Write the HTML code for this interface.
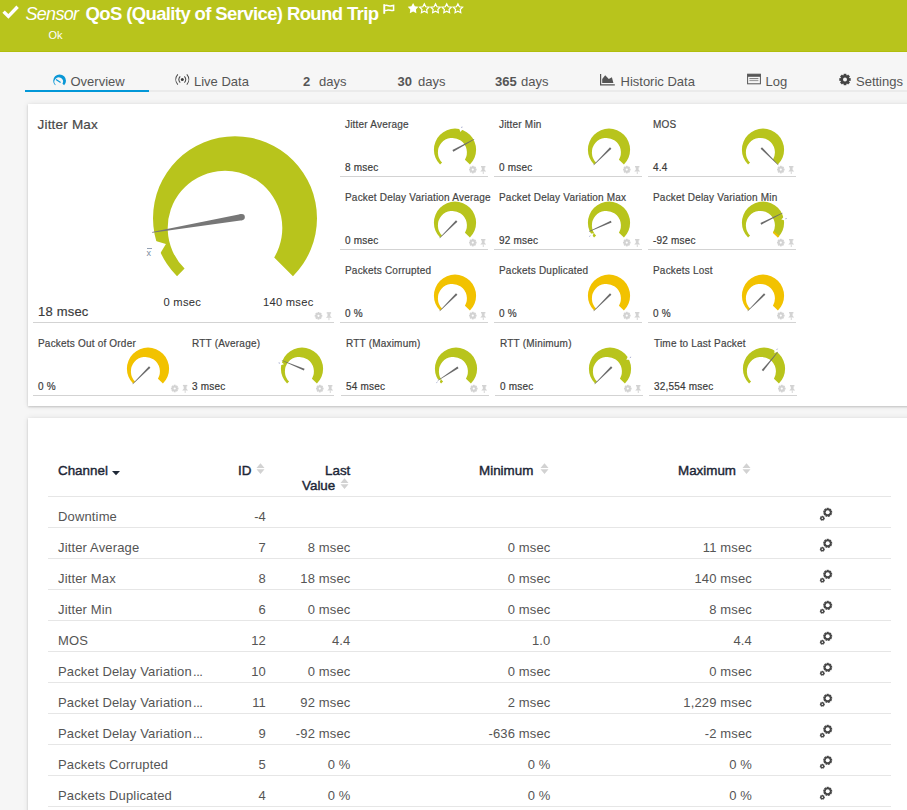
<!DOCTYPE html>
<html><head><meta charset="utf-8">
<style>
*{margin:0;padding:0;box-sizing:border-box}
html,body{width:907px;height:810px;overflow:hidden;background:#f6f6f6;font-family:"Liberation Sans",sans-serif;color:#4d4d4d}
.abs{position:absolute}
#hdr{position:absolute;left:0;top:0;width:907px;height:52px;background:#b8c41c;border-bottom:1px solid #b1be0d}
.ttl{position:absolute;color:#fff;white-space:nowrap;line-height:20px}
#ok{position:absolute;left:48.5px;top:28px;font-size:11px;color:#fff;line-height:14px}
.tab{position:absolute;top:74px;font-size:13px;color:#555;line-height:16px;white-space:nowrap}
.tab b{color:#555;font-weight:bold}
#tabline{position:absolute;left:25px;top:90px;width:882px;height:2px;background:#ebebeb}
#tabsel{position:absolute;left:25px;top:90px;width:124px;height:2px;background:#0398d8}
.panel{position:absolute;background:#fff;box-shadow:0 1px 2px rgba(0,0,0,0.18),0 0 6px rgba(0,0,0,0.09)}
.lab{position:absolute;font-size:10px;letter-spacing:0.2px;line-height:12px;color:#444;white-space:nowrap;-webkit-text-stroke:0.18px #444}
.val{position:absolute;font-size:10px;letter-spacing:0.2px;line-height:12px;color:#3a3a3a;white-space:nowrap;-webkit-text-stroke:0.18px #3a3a3a}
.uline{position:absolute;width:148px;height:1px;background:#d3d3d3}
#gsvg{position:absolute;left:0;top:0}
.th{position:absolute;font-size:13.4px;font-weight:normal;color:#1c2636;line-height:15px;white-space:nowrap;-webkit-text-stroke:0.4px #1c2636}
.tr{position:absolute;left:48px;width:843px;height:30px;font-size:13px;color:#555;line-height:15px;letter-spacing:0.15px}
.tr span{position:absolute;top:12px;white-space:nowrap}
.c0{left:10px}
.c1{right:625px;text-align:right}
.c2{right:540.5px;text-align:right}
.c3{right:340.5px;text-align:right}
.c4{right:139px;text-align:right}
.cg{position:absolute;left:770px;top:8px}
.tsep{position:absolute;left:48px;width:843px;height:1px;background:#e6e6e6}
</style></head>
<body>
<div id="hdr">
  <svg class="abs" style="left:0;top:0" width="907" height="52">
    <path d="M3.6,11.6 L8.4,16.4 L17.6,6.8" fill="none" stroke="#fff" stroke-width="3.4"/>
    <rect x="383.3" y="4.2" width="1.9" height="9.6" fill="#fff"/>
    <path d="M385,5.6 C387.2,4.6 389.4,6.6 391.6,5.8 L393.6,5.4 L393.6,10.4 C391.4,11.2 389.2,9.4 387,10.2 L385,10.4" fill="none" stroke="#fff" stroke-width="1.5"/>
    <g>
      <path d="M413.10,3.00 L414.84,6.20 L418.43,6.87 L415.92,9.52 L416.39,13.13 L413.10,11.57 L409.81,13.13 L410.28,9.52 L407.77,6.87 L411.36,6.20 Z" fill="#fff"/><path d="M424.30,3.80 L425.74,6.72 L428.96,7.19 L426.63,9.46 L427.18,12.66 L424.30,11.15 L421.42,12.66 L421.97,9.46 L419.64,7.19 L422.86,6.72 Z" fill="none" stroke="#fff" stroke-width="1.2"/><path d="M435.50,3.80 L436.94,6.72 L440.16,7.19 L437.83,9.46 L438.38,12.66 L435.50,11.15 L432.62,12.66 L433.17,9.46 L430.84,7.19 L434.06,6.72 Z" fill="none" stroke="#fff" stroke-width="1.2"/><path d="M446.70,3.80 L448.14,6.72 L451.36,7.19 L449.03,9.46 L449.58,12.66 L446.70,11.15 L443.82,12.66 L444.37,9.46 L442.04,7.19 L445.26,6.72 Z" fill="none" stroke="#fff" stroke-width="1.2"/><path d="M457.90,3.80 L459.34,6.72 L462.56,7.19 L460.23,9.46 L460.78,12.66 L457.90,11.15 L455.02,12.66 L455.57,9.46 L453.24,7.19 L456.46,6.72 Z" fill="none" stroke="#fff" stroke-width="1.2"/>
    </g>
  </svg>
  <div class="ttl" style="left:25.5px;top:4px;font-style:italic;font-size:18px;letter-spacing:-0.7px">Sensor</div>
  <div class="ttl" style="left:85.5px;top:4px;font-weight:bold;font-size:18.5px;letter-spacing:-0.62px">QoS (Quality of Service) Round Trip</div>
  <div id="ok">Ok</div>
</div>

<div id="tabline"></div>
<div id="tabsel"></div>
<svg class="abs" style="left:0;top:60px" width="907" height="30">
  <!-- overview icon -->
  <g transform="translate(0,-60)">
  <path d="M55.07,85.33 A6.40,6.40 0 1 1 64.13,85.33 L62.50,83.70 A4.30,4.30 0 1 0 55.66,84.74 Z" fill="#0a97d6"/>
  <path d="M56,79.6 L60.6,82.5" stroke="#0a97d6" stroke-width="1.2"/>
  <!-- live data -->
  <g fill="none" stroke="#4a4a4a" stroke-width="1.05">
    <path d="M177.8,74.4 C175.2,77.4 175.2,81.6 177.8,84.6"/>
    <path d="M180.2,76.4 C178.6,78.2 178.6,80.8 180.2,82.6"/>
    <path d="M186.8,74.4 C189.4,77.4 189.4,81.6 186.8,84.6"/>
    <path d="M184.4,76.4 C186,78.2 186,80.8 184.4,82.6"/>
  </g>
  <circle cx="182.3" cy="79.5" r="1.5" fill="#3a3a3a"/>
  <!-- historic -->
  <path d="M600.6,74 L600.6,84.8 L614.8,84.8" fill="none" stroke="#555" stroke-width="1.2"/>
  <path d="M602.2,83 L602.2,79 L605.2,75.2 L608.8,79.1 L611.9,77.2 L613.4,83 Z" fill="#555"/>
  <!-- log -->
  <rect x="747.6" y="74.2" width="12.8" height="9.6" fill="none" stroke="#555" stroke-width="1"/>
  <rect x="747.6" y="74.2" width="12.8" height="2.6" fill="#555"/>
  <rect x="749.4" y="78.2" width="9" height="0.9" fill="#666"/>
  <rect x="749.4" y="80.2" width="9" height="0.9" fill="#888"/>
  <!-- settings gear -->
  <g fill="#444"><circle cx="845.00" cy="79.50" r="4.56"/><rect x="843.63" y="73.80" width="2.74" height="5.70" transform="rotate(0.0 845.00 79.50)"/><rect x="843.63" y="73.80" width="2.74" height="5.70" transform="rotate(45.0 845.00 79.50)"/><rect x="843.63" y="73.80" width="2.74" height="5.70" transform="rotate(90.0 845.00 79.50)"/><rect x="843.63" y="73.80" width="2.74" height="5.70" transform="rotate(135.0 845.00 79.50)"/><rect x="843.63" y="73.80" width="2.74" height="5.70" transform="rotate(180.0 845.00 79.50)"/><rect x="843.63" y="73.80" width="2.74" height="5.70" transform="rotate(225.0 845.00 79.50)"/><rect x="843.63" y="73.80" width="2.74" height="5.70" transform="rotate(270.0 845.00 79.50)"/><rect x="843.63" y="73.80" width="2.74" height="5.70" transform="rotate(315.0 845.00 79.50)"/></g><circle cx="845.00" cy="79.50" r="2.00" fill="#f5f5f5"/>
  </g>
</svg>
<div class="tab" style="left:70.5px">Overview</div>
<div class="tab" style="left:194px">Live Data</div>
<div class="tab" style="left:303px"><b>2</b></div><div class="tab" style="left:319px">days</div>
<div class="tab" style="left:397.5px"><b>30</b></div><div class="tab" style="left:418px">days</div>
<div class="tab" style="left:495px"><b>365</b></div><div class="tab" style="left:521px">days</div>
<div class="tab" style="left:620.5px">Historic Data</div>
<div class="tab" style="left:765.5px">Log</div>
<div class="tab" style="left:856px">Settings</div>

<div class="panel" style="left:28px;top:104px;width:900px;height:302px"></div>
<div class="panel" style="left:28px;top:418px;width:900px;height:420px"></div>

<div class="lab" style="left:37.5px;top:117px;font-size:13.5px;line-height:15px;color:#4a4a4a">Jitter Max</div>
<div class="val" style="left:38px;top:304px;font-size:13px;line-height:15px">18 msec</div>
<div class="val" style="left:163.5px;top:295px;font-size:11.2px;line-height:14px;color:#333;-webkit-text-stroke:0.05px #333;letter-spacing:0.25px">0 msec</div>
<div class="val" style="left:263px;top:295px;font-size:11.2px;line-height:14px;color:#333;-webkit-text-stroke:0.05px #333;letter-spacing:0.25px">140 msec</div>
<div class="uline" style="left:33px;top:322px;width:301px"></div>
<div class="lab" style="left:345px;top:119px">Jitter Average</div>
<div class="val" style="left:345px;top:162px">8 msec</div>
<div class="uline" style="left:340px;top:176px"></div>
<div class="lab" style="left:499px;top:119px">Jitter Min</div>
<div class="val" style="left:499px;top:162px">0 msec</div>
<div class="uline" style="left:494px;top:176px"></div>
<div class="lab" style="left:653px;top:119px">MOS</div>
<div class="val" style="left:653px;top:162px">4.4</div>
<div class="uline" style="left:648px;top:176px"></div>
<div class="lab" style="left:345px;top:192px">Packet Delay Variation Average</div>
<div class="val" style="left:345px;top:235px">0 msec</div>
<div class="uline" style="left:340px;top:249px"></div>
<div class="lab" style="left:499px;top:192px">Packet Delay Variation Max</div>
<div class="val" style="left:499px;top:235px">92 msec</div>
<div class="uline" style="left:494px;top:249px"></div>
<div class="lab" style="left:653px;top:192px">Packet Delay Variation Min</div>
<div class="val" style="left:653px;top:235px">-92 msec</div>
<div class="uline" style="left:648px;top:249px"></div>
<div class="lab" style="left:345px;top:265px">Packets Corrupted</div>
<div class="val" style="left:345px;top:308px">0 %</div>
<div class="uline" style="left:340px;top:322px"></div>
<div class="lab" style="left:499px;top:265px">Packets Duplicated</div>
<div class="val" style="left:499px;top:308px">0 %</div>
<div class="uline" style="left:494px;top:322px"></div>
<div class="lab" style="left:653px;top:265px">Packets Lost</div>
<div class="val" style="left:653px;top:308px">0 %</div>
<div class="uline" style="left:648px;top:322px"></div>
<div class="lab" style="left:38px;top:338px">Packets Out of Order</div>
<div class="val" style="left:38px;top:381px">0 %</div>
<div class="lab" style="left:192px;top:338px">RTT (Average)</div>
<div class="val" style="left:192px;top:381px">3 msec</div>
<div class="lab" style="left:346px;top:338px">RTT (Maximum)</div>
<div class="val" style="left:346px;top:381px">54 msec</div>
<div class="uline" style="left:341px;top:395px"></div>
<div class="lab" style="left:500px;top:338px">RTT (Minimum)</div>
<div class="val" style="left:500px;top:381px">0 msec</div>
<div class="uline" style="left:495px;top:395px"></div>
<div class="lab" style="left:654px;top:338px">Time to Last Packet</div>
<div class="val" style="left:654px;top:381px">32,554 msec</div>
<div class="uline" style="left:649px;top:395px"></div>
<div class="uline" style="left:33px;top:395px;width:301px"></div>
<svg id="gsvg" width="907" height="810">
<path d="M177.02,276.18 A82.00,82.00 0 1 1 292.98,276.18 L274.19,257.39 A57.30,57.30 0 1 0 184.58,268.62 Z" fill="#b8c41c"/>
<path d="M159.90,254.02 L165.92,243.89 L154.94,240.85 Z" fill="#fff"/>
<path d="M241.17,213.95 L152.13,231.96 L152.27,232.75 L242.23,220.16 Z" fill="#777777"/><circle cx="241.70" cy="217.05" r="3.15" fill="#777777"/>
<text x="146.5" y="255.5" font-size="9" fill="#7a8aa0" font-family="Liberation Sans, sans-serif">x</text><rect x="147" y="248" width="5" height="0.8" fill="#7a8aa0"/>
<g fill="#d3d3d3"><circle cx="318.50" cy="315.80" r="3.04"/><rect x="317.59" y="312.00" width="1.82" height="3.80" transform="rotate(0.0 318.50 315.80)"/><rect x="317.59" y="312.00" width="1.82" height="3.80" transform="rotate(45.0 318.50 315.80)"/><rect x="317.59" y="312.00" width="1.82" height="3.80" transform="rotate(90.0 318.50 315.80)"/><rect x="317.59" y="312.00" width="1.82" height="3.80" transform="rotate(135.0 318.50 315.80)"/><rect x="317.59" y="312.00" width="1.82" height="3.80" transform="rotate(180.0 318.50 315.80)"/><rect x="317.59" y="312.00" width="1.82" height="3.80" transform="rotate(225.0 318.50 315.80)"/><rect x="317.59" y="312.00" width="1.82" height="3.80" transform="rotate(270.0 318.50 315.80)"/><rect x="317.59" y="312.00" width="1.82" height="3.80" transform="rotate(315.0 318.50 315.80)"/></g><circle cx="318.50" cy="315.80" r="1.10" fill="#fff"/><g fill="#d3d3d3"><rect x="326.70" y="312.20" width="4.4" height="1.4"/><rect x="327.50" y="313.20" width="2.8" height="3.4"/><path d="M325.90,317.80 L327.30,316.20 L330.50,316.20 L331.90,317.80 Z"/><rect x="328.50" y="317.60" width="0.9" height="2.6"/></g>
<path d="M440.08,164.62 A21.10,21.10 0 1 1 469.92,164.62 L464.95,159.65 A14.50,14.50 0 1 0 442.10,162.60 Z" fill="#b8c41c"/><path d="M458.87,127.74 L460.44,131.91 L462.99,128.88 Z" fill="#fff"/><path d="M461.64,127.99 L462.05,126.65" stroke="#9aa0c8" stroke-width="0.9"/><path d="M453.34,151.68 L474.28,139.52 L474.04,139.08 L452.44,150.01 Z" fill="#6a6a6a"/>
<g fill="#d3d3d3"><circle cx="472.80" cy="169.60" r="3.04"/><rect x="471.89" y="165.80" width="1.82" height="3.80" transform="rotate(0.0 472.80 169.60)"/><rect x="471.89" y="165.80" width="1.82" height="3.80" transform="rotate(45.0 472.80 169.60)"/><rect x="471.89" y="165.80" width="1.82" height="3.80" transform="rotate(90.0 472.80 169.60)"/><rect x="471.89" y="165.80" width="1.82" height="3.80" transform="rotate(135.0 472.80 169.60)"/><rect x="471.89" y="165.80" width="1.82" height="3.80" transform="rotate(180.0 472.80 169.60)"/><rect x="471.89" y="165.80" width="1.82" height="3.80" transform="rotate(225.0 472.80 169.60)"/><rect x="471.89" y="165.80" width="1.82" height="3.80" transform="rotate(270.0 472.80 169.60)"/><rect x="471.89" y="165.80" width="1.82" height="3.80" transform="rotate(315.0 472.80 169.60)"/></g><circle cx="472.80" cy="169.60" r="1.10" fill="#fff"/><g fill="#d3d3d3"><rect x="481.00" y="166.00" width="4.4" height="1.4"/><rect x="481.80" y="167.00" width="2.8" height="3.4"/><path d="M480.20,171.60 L481.60,170.00 L484.80,170.00 L486.20,171.60 Z"/><rect x="482.80" y="171.40" width="0.9" height="2.6"/></g>
<path d="M594.08,164.62 A21.10,21.10 0 1 1 623.92,164.62 L618.95,159.65 A14.50,14.50 0 1 0 596.10,162.60 Z" fill="#b8c41c"/><path d="M610.03,147.33 L593.41,164.94 L593.76,165.29 L611.37,148.67 Z" fill="#6a6a6a"/>
<g fill="#d3d3d3"><circle cx="626.80" cy="169.60" r="3.04"/><rect x="625.89" y="165.80" width="1.82" height="3.80" transform="rotate(0.0 626.80 169.60)"/><rect x="625.89" y="165.80" width="1.82" height="3.80" transform="rotate(45.0 626.80 169.60)"/><rect x="625.89" y="165.80" width="1.82" height="3.80" transform="rotate(90.0 626.80 169.60)"/><rect x="625.89" y="165.80" width="1.82" height="3.80" transform="rotate(135.0 626.80 169.60)"/><rect x="625.89" y="165.80" width="1.82" height="3.80" transform="rotate(180.0 626.80 169.60)"/><rect x="625.89" y="165.80" width="1.82" height="3.80" transform="rotate(225.0 626.80 169.60)"/><rect x="625.89" y="165.80" width="1.82" height="3.80" transform="rotate(270.0 626.80 169.60)"/><rect x="625.89" y="165.80" width="1.82" height="3.80" transform="rotate(315.0 626.80 169.60)"/></g><circle cx="626.80" cy="169.60" r="1.10" fill="#fff"/><g fill="#d3d3d3"><rect x="635.00" y="166.00" width="4.4" height="1.4"/><rect x="635.80" y="167.00" width="2.8" height="3.4"/><path d="M634.20,171.60 L635.60,170.00 L638.80,170.00 L640.20,171.60 Z"/><rect x="636.80" y="171.40" width="0.9" height="2.6"/></g>
<path d="M748.08,164.62 A21.10,21.10 0 1 1 777.92,164.62 L772.95,159.65 A14.50,14.50 0 1 0 750.10,162.60 Z" fill="#b8c41c"/><path d="M760.63,148.67 L778.24,165.29 L778.59,164.94 L761.97,147.33 Z" fill="#6a6a6a"/>
<g fill="#d3d3d3"><circle cx="780.80" cy="169.60" r="3.04"/><rect x="779.89" y="165.80" width="1.82" height="3.80" transform="rotate(0.0 780.80 169.60)"/><rect x="779.89" y="165.80" width="1.82" height="3.80" transform="rotate(45.0 780.80 169.60)"/><rect x="779.89" y="165.80" width="1.82" height="3.80" transform="rotate(90.0 780.80 169.60)"/><rect x="779.89" y="165.80" width="1.82" height="3.80" transform="rotate(135.0 780.80 169.60)"/><rect x="779.89" y="165.80" width="1.82" height="3.80" transform="rotate(180.0 780.80 169.60)"/><rect x="779.89" y="165.80" width="1.82" height="3.80" transform="rotate(225.0 780.80 169.60)"/><rect x="779.89" y="165.80" width="1.82" height="3.80" transform="rotate(270.0 780.80 169.60)"/><rect x="779.89" y="165.80" width="1.82" height="3.80" transform="rotate(315.0 780.80 169.60)"/></g><circle cx="780.80" cy="169.60" r="1.10" fill="#fff"/><g fill="#d3d3d3"><rect x="789.00" y="166.00" width="4.4" height="1.4"/><rect x="789.80" y="167.00" width="2.8" height="3.4"/><path d="M788.20,171.60 L789.60,170.00 L792.80,170.00 L794.20,171.60 Z"/><rect x="790.80" y="171.40" width="0.9" height="2.6"/></g>
<path d="M440.08,237.62 A21.10,21.10 0 1 1 469.92,237.62 L464.95,232.65 A14.50,14.50 0 1 0 442.10,235.60 Z" fill="#b8c41c"/><path d="M456.03,220.33 L439.41,237.94 L439.76,238.29 L457.37,221.67 Z" fill="#6a6a6a"/>
<g fill="#d3d3d3"><circle cx="472.80" cy="242.60" r="3.04"/><rect x="471.89" y="238.80" width="1.82" height="3.80" transform="rotate(0.0 472.80 242.60)"/><rect x="471.89" y="238.80" width="1.82" height="3.80" transform="rotate(45.0 472.80 242.60)"/><rect x="471.89" y="238.80" width="1.82" height="3.80" transform="rotate(90.0 472.80 242.60)"/><rect x="471.89" y="238.80" width="1.82" height="3.80" transform="rotate(135.0 472.80 242.60)"/><rect x="471.89" y="238.80" width="1.82" height="3.80" transform="rotate(180.0 472.80 242.60)"/><rect x="471.89" y="238.80" width="1.82" height="3.80" transform="rotate(225.0 472.80 242.60)"/><rect x="471.89" y="238.80" width="1.82" height="3.80" transform="rotate(270.0 472.80 242.60)"/><rect x="471.89" y="238.80" width="1.82" height="3.80" transform="rotate(315.0 472.80 242.60)"/></g><circle cx="472.80" cy="242.60" r="1.10" fill="#fff"/><g fill="#d3d3d3"><rect x="481.00" y="239.00" width="4.4" height="1.4"/><rect x="481.80" y="240.00" width="2.8" height="3.4"/><path d="M480.20,244.60 L481.60,243.00 L484.80,243.00 L486.20,244.60 Z"/><rect x="482.80" y="244.40" width="0.9" height="2.6"/></g>
<path d="M594.08,237.62 A21.10,21.10 0 1 1 623.92,237.62 L618.95,232.65 A14.50,14.50 0 1 0 596.10,235.60 Z" fill="#b8c41c"/><path d="M591.92,237.03 L593.76,233.37 L589.69,233.85 Z" fill="#fff"/><path d="M590.41,235.72 L589.26,236.52" stroke="#9aa0c8" stroke-width="0.9"/><path d="M610.80,220.85 L589.00,231.37 L589.20,231.83 L611.58,222.59 Z" fill="#6a6a6a"/>
<g fill="#d3d3d3"><circle cx="626.80" cy="242.60" r="3.04"/><rect x="625.89" y="238.80" width="1.82" height="3.80" transform="rotate(0.0 626.80 242.60)"/><rect x="625.89" y="238.80" width="1.82" height="3.80" transform="rotate(45.0 626.80 242.60)"/><rect x="625.89" y="238.80" width="1.82" height="3.80" transform="rotate(90.0 626.80 242.60)"/><rect x="625.89" y="238.80" width="1.82" height="3.80" transform="rotate(135.0 626.80 242.60)"/><rect x="625.89" y="238.80" width="1.82" height="3.80" transform="rotate(180.0 626.80 242.60)"/><rect x="625.89" y="238.80" width="1.82" height="3.80" transform="rotate(225.0 626.80 242.60)"/><rect x="625.89" y="238.80" width="1.82" height="3.80" transform="rotate(270.0 626.80 242.60)"/><rect x="625.89" y="238.80" width="1.82" height="3.80" transform="rotate(315.0 626.80 242.60)"/></g><circle cx="626.80" cy="242.60" r="1.10" fill="#fff"/><g fill="#d3d3d3"><rect x="635.00" y="239.00" width="4.4" height="1.4"/><rect x="635.80" y="240.00" width="2.8" height="3.4"/><path d="M634.20,244.60 L635.60,243.00 L638.80,243.00 L640.20,244.60 Z"/><rect x="636.80" y="244.40" width="0.9" height="2.6"/></g>
<path d="M748.08,237.62 A21.10,21.10 0 1 1 777.92,237.62 L772.95,232.65 A14.50,14.50 0 1 0 750.10,235.60 Z" fill="#b8c41c"/><path d="M784.33,216.18 L781.32,219.47 L785.20,220.56 Z" fill="#fff"/><path d="M785.36,218.76 L786.73,218.52" stroke="#9aa0c8" stroke-width="0.9"/><path d="M777.92,237.62 L772.95,232.65 L773.64,231.32 L779.40,235.98 Z" fill="#f2c200"/><path d="M761.28,224.63 L782.59,213.13 L782.36,212.68 L760.43,222.93 Z" fill="#6a6a6a"/>
<g fill="#d3d3d3"><circle cx="780.80" cy="242.60" r="3.04"/><rect x="779.89" y="238.80" width="1.82" height="3.80" transform="rotate(0.0 780.80 242.60)"/><rect x="779.89" y="238.80" width="1.82" height="3.80" transform="rotate(45.0 780.80 242.60)"/><rect x="779.89" y="238.80" width="1.82" height="3.80" transform="rotate(90.0 780.80 242.60)"/><rect x="779.89" y="238.80" width="1.82" height="3.80" transform="rotate(135.0 780.80 242.60)"/><rect x="779.89" y="238.80" width="1.82" height="3.80" transform="rotate(180.0 780.80 242.60)"/><rect x="779.89" y="238.80" width="1.82" height="3.80" transform="rotate(225.0 780.80 242.60)"/><rect x="779.89" y="238.80" width="1.82" height="3.80" transform="rotate(270.0 780.80 242.60)"/><rect x="779.89" y="238.80" width="1.82" height="3.80" transform="rotate(315.0 780.80 242.60)"/></g><circle cx="780.80" cy="242.60" r="1.10" fill="#fff"/><g fill="#d3d3d3"><rect x="789.00" y="239.00" width="4.4" height="1.4"/><rect x="789.80" y="240.00" width="2.8" height="3.4"/><path d="M788.20,244.60 L789.60,243.00 L792.80,243.00 L794.20,244.60 Z"/><rect x="790.80" y="244.40" width="0.9" height="2.6"/></g>
<path d="M440.08,310.62 A21.10,21.10 0 1 1 469.92,310.62 L464.95,305.65 A14.50,14.50 0 1 0 442.10,308.60 Z" fill="#f2c200"/><path d="M456.03,293.33 L439.41,310.94 L439.76,311.29 L457.37,294.67 Z" fill="#6a6a6a"/>
<g fill="#d3d3d3"><circle cx="472.80" cy="315.60" r="3.04"/><rect x="471.89" y="311.80" width="1.82" height="3.80" transform="rotate(0.0 472.80 315.60)"/><rect x="471.89" y="311.80" width="1.82" height="3.80" transform="rotate(45.0 472.80 315.60)"/><rect x="471.89" y="311.80" width="1.82" height="3.80" transform="rotate(90.0 472.80 315.60)"/><rect x="471.89" y="311.80" width="1.82" height="3.80" transform="rotate(135.0 472.80 315.60)"/><rect x="471.89" y="311.80" width="1.82" height="3.80" transform="rotate(180.0 472.80 315.60)"/><rect x="471.89" y="311.80" width="1.82" height="3.80" transform="rotate(225.0 472.80 315.60)"/><rect x="471.89" y="311.80" width="1.82" height="3.80" transform="rotate(270.0 472.80 315.60)"/><rect x="471.89" y="311.80" width="1.82" height="3.80" transform="rotate(315.0 472.80 315.60)"/></g><circle cx="472.80" cy="315.60" r="1.10" fill="#fff"/><g fill="#d3d3d3"><rect x="481.00" y="312.00" width="4.4" height="1.4"/><rect x="481.80" y="313.00" width="2.8" height="3.4"/><path d="M480.20,317.60 L481.60,316.00 L484.80,316.00 L486.20,317.60 Z"/><rect x="482.80" y="317.40" width="0.9" height="2.6"/></g>
<path d="M594.08,310.62 A21.10,21.10 0 1 1 623.92,310.62 L618.95,305.65 A14.50,14.50 0 1 0 596.10,308.60 Z" fill="#f2c200"/><path d="M610.03,293.33 L593.41,310.94 L593.76,311.29 L611.37,294.67 Z" fill="#6a6a6a"/>
<g fill="#d3d3d3"><circle cx="626.80" cy="315.60" r="3.04"/><rect x="625.89" y="311.80" width="1.82" height="3.80" transform="rotate(0.0 626.80 315.60)"/><rect x="625.89" y="311.80" width="1.82" height="3.80" transform="rotate(45.0 626.80 315.60)"/><rect x="625.89" y="311.80" width="1.82" height="3.80" transform="rotate(90.0 626.80 315.60)"/><rect x="625.89" y="311.80" width="1.82" height="3.80" transform="rotate(135.0 626.80 315.60)"/><rect x="625.89" y="311.80" width="1.82" height="3.80" transform="rotate(180.0 626.80 315.60)"/><rect x="625.89" y="311.80" width="1.82" height="3.80" transform="rotate(225.0 626.80 315.60)"/><rect x="625.89" y="311.80" width="1.82" height="3.80" transform="rotate(270.0 626.80 315.60)"/><rect x="625.89" y="311.80" width="1.82" height="3.80" transform="rotate(315.0 626.80 315.60)"/></g><circle cx="626.80" cy="315.60" r="1.10" fill="#fff"/><g fill="#d3d3d3"><rect x="635.00" y="312.00" width="4.4" height="1.4"/><rect x="635.80" y="313.00" width="2.8" height="3.4"/><path d="M634.20,317.60 L635.60,316.00 L638.80,316.00 L640.20,317.60 Z"/><rect x="636.80" y="317.40" width="0.9" height="2.6"/></g>
<path d="M748.08,310.62 A21.10,21.10 0 1 1 777.92,310.62 L772.95,305.65 A14.50,14.50 0 1 0 750.10,308.60 Z" fill="#f2c200"/><path d="M764.03,293.33 L747.41,310.94 L747.76,311.29 L765.37,294.67 Z" fill="#6a6a6a"/>
<g fill="#d3d3d3"><circle cx="780.80" cy="315.60" r="3.04"/><rect x="779.89" y="311.80" width="1.82" height="3.80" transform="rotate(0.0 780.80 315.60)"/><rect x="779.89" y="311.80" width="1.82" height="3.80" transform="rotate(45.0 780.80 315.60)"/><rect x="779.89" y="311.80" width="1.82" height="3.80" transform="rotate(90.0 780.80 315.60)"/><rect x="779.89" y="311.80" width="1.82" height="3.80" transform="rotate(135.0 780.80 315.60)"/><rect x="779.89" y="311.80" width="1.82" height="3.80" transform="rotate(180.0 780.80 315.60)"/><rect x="779.89" y="311.80" width="1.82" height="3.80" transform="rotate(225.0 780.80 315.60)"/><rect x="779.89" y="311.80" width="1.82" height="3.80" transform="rotate(270.0 780.80 315.60)"/><rect x="779.89" y="311.80" width="1.82" height="3.80" transform="rotate(315.0 780.80 315.60)"/></g><circle cx="780.80" cy="315.60" r="1.10" fill="#fff"/><g fill="#d3d3d3"><rect x="789.00" y="312.00" width="4.4" height="1.4"/><rect x="789.80" y="313.00" width="2.8" height="3.4"/><path d="M788.20,317.60 L789.60,316.00 L792.80,316.00 L794.20,317.60 Z"/><rect x="790.80" y="317.40" width="0.9" height="2.6"/></g>
<path d="M133.08,383.62 A21.10,21.10 0 1 1 162.92,383.62 L157.95,378.65 A14.50,14.50 0 1 0 135.10,381.60 Z" fill="#f2c200"/><path d="M149.03,366.33 L132.41,383.94 L132.76,384.29 L150.37,367.67 Z" fill="#6a6a6a"/>
<g fill="#d3d3d3"><circle cx="174.70" cy="388.50" r="3.04"/><rect x="173.79" y="384.70" width="1.82" height="3.80" transform="rotate(0.0 174.70 388.50)"/><rect x="173.79" y="384.70" width="1.82" height="3.80" transform="rotate(45.0 174.70 388.50)"/><rect x="173.79" y="384.70" width="1.82" height="3.80" transform="rotate(90.0 174.70 388.50)"/><rect x="173.79" y="384.70" width="1.82" height="3.80" transform="rotate(135.0 174.70 388.50)"/><rect x="173.79" y="384.70" width="1.82" height="3.80" transform="rotate(180.0 174.70 388.50)"/><rect x="173.79" y="384.70" width="1.82" height="3.80" transform="rotate(225.0 174.70 388.50)"/><rect x="173.79" y="384.70" width="1.82" height="3.80" transform="rotate(270.0 174.70 388.50)"/><rect x="173.79" y="384.70" width="1.82" height="3.80" transform="rotate(315.0 174.70 388.50)"/></g><circle cx="174.70" cy="388.50" r="1.10" fill="#fff"/><g fill="#d3d3d3"><rect x="182.90" y="384.90" width="4.4" height="1.4"/><rect x="183.70" y="385.90" width="2.8" height="3.4"/><path d="M182.10,390.50 L183.50,388.90 L186.70,388.90 L188.10,390.50 Z"/><rect x="184.70" y="390.30" width="0.9" height="2.6"/></g>
<path d="M287.08,383.62 A21.10,21.10 0 1 1 316.92,383.62 L311.95,378.65 A14.50,14.50 0 1 0 289.10,381.60 Z" fill="#b8c41c"/><path d="M279.92,365.60 L283.95,364.20 L280.91,361.44 Z" fill="#fff"/><path d="M279.97,363.21 L278.62,362.87" stroke="#9aa0c8" stroke-width="0.9"/><path d="M304.58,368.74 L281.96,360.13 L281.76,360.59 L303.85,370.50 Z" fill="#6a6a6a"/>
<g fill="#d3d3d3"><circle cx="319.80" cy="388.60" r="3.04"/><rect x="318.89" y="384.80" width="1.82" height="3.80" transform="rotate(0.0 319.80 388.60)"/><rect x="318.89" y="384.80" width="1.82" height="3.80" transform="rotate(45.0 319.80 388.60)"/><rect x="318.89" y="384.80" width="1.82" height="3.80" transform="rotate(90.0 319.80 388.60)"/><rect x="318.89" y="384.80" width="1.82" height="3.80" transform="rotate(135.0 319.80 388.60)"/><rect x="318.89" y="384.80" width="1.82" height="3.80" transform="rotate(180.0 319.80 388.60)"/><rect x="318.89" y="384.80" width="1.82" height="3.80" transform="rotate(225.0 319.80 388.60)"/><rect x="318.89" y="384.80" width="1.82" height="3.80" transform="rotate(270.0 319.80 388.60)"/><rect x="318.89" y="384.80" width="1.82" height="3.80" transform="rotate(315.0 319.80 388.60)"/></g><circle cx="319.80" cy="388.60" r="1.10" fill="#fff"/><g fill="#d3d3d3"><rect x="328.00" y="385.00" width="4.4" height="1.4"/><rect x="328.80" y="386.00" width="2.8" height="3.4"/><path d="M327.20,390.60 L328.60,389.00 L331.80,389.00 L333.20,390.60 Z"/><rect x="329.80" y="390.40" width="0.9" height="2.6"/></g>
<path d="M441.08,383.62 A21.10,21.10 0 1 1 470.92,383.62 L465.95,378.65 A14.50,14.50 0 1 0 443.10,381.60 Z" fill="#b8c41c"/><path d="M439.17,383.33 L440.86,379.50 L436.69,379.85 Z" fill="#fff"/><path d="M437.52,381.88 L436.38,382.69" stroke="#9aa0c8" stroke-width="0.9"/><path d="M457.49,366.59 L437.60,380.40 L437.87,380.81 L458.53,368.19 Z" fill="#6a6a6a"/>
<g fill="#d3d3d3"><circle cx="473.80" cy="388.60" r="3.04"/><rect x="472.89" y="384.80" width="1.82" height="3.80" transform="rotate(0.0 473.80 388.60)"/><rect x="472.89" y="384.80" width="1.82" height="3.80" transform="rotate(45.0 473.80 388.60)"/><rect x="472.89" y="384.80" width="1.82" height="3.80" transform="rotate(90.0 473.80 388.60)"/><rect x="472.89" y="384.80" width="1.82" height="3.80" transform="rotate(135.0 473.80 388.60)"/><rect x="472.89" y="384.80" width="1.82" height="3.80" transform="rotate(180.0 473.80 388.60)"/><rect x="472.89" y="384.80" width="1.82" height="3.80" transform="rotate(225.0 473.80 388.60)"/><rect x="472.89" y="384.80" width="1.82" height="3.80" transform="rotate(270.0 473.80 388.60)"/><rect x="472.89" y="384.80" width="1.82" height="3.80" transform="rotate(315.0 473.80 388.60)"/></g><circle cx="473.80" cy="388.60" r="1.10" fill="#fff"/><g fill="#d3d3d3"><rect x="482.00" y="385.00" width="4.4" height="1.4"/><rect x="482.80" y="386.00" width="2.8" height="3.4"/><path d="M481.20,390.60 L482.60,389.00 L485.80,389.00 L487.20,390.60 Z"/><rect x="483.80" y="390.40" width="0.9" height="2.6"/></g>
<path d="M595.08,383.62 A21.10,21.10 0 1 1 624.92,383.62 L619.95,378.65 A14.50,14.50 0 1 0 597.10,381.60 Z" fill="#b8c41c"/><path d="M628.27,355.91 L626.27,359.68 L630.37,359.63 Z" fill="#fff"/><path d="M629.85,357.69 L631.08,357.02" stroke="#9aa0c8" stroke-width="0.9"/><path d="M611.03,366.33 L594.41,383.94 L594.76,384.29 L612.37,367.67 Z" fill="#6a6a6a"/>
<g fill="#d3d3d3"><circle cx="627.80" cy="388.60" r="3.04"/><rect x="626.89" y="384.80" width="1.82" height="3.80" transform="rotate(0.0 627.80 388.60)"/><rect x="626.89" y="384.80" width="1.82" height="3.80" transform="rotate(45.0 627.80 388.60)"/><rect x="626.89" y="384.80" width="1.82" height="3.80" transform="rotate(90.0 627.80 388.60)"/><rect x="626.89" y="384.80" width="1.82" height="3.80" transform="rotate(135.0 627.80 388.60)"/><rect x="626.89" y="384.80" width="1.82" height="3.80" transform="rotate(180.0 627.80 388.60)"/><rect x="626.89" y="384.80" width="1.82" height="3.80" transform="rotate(225.0 627.80 388.60)"/><rect x="626.89" y="384.80" width="1.82" height="3.80" transform="rotate(270.0 627.80 388.60)"/><rect x="626.89" y="384.80" width="1.82" height="3.80" transform="rotate(315.0 627.80 388.60)"/></g><circle cx="627.80" cy="388.60" r="1.10" fill="#fff"/><g fill="#d3d3d3"><rect x="636.00" y="385.00" width="4.4" height="1.4"/><rect x="636.80" y="386.00" width="2.8" height="3.4"/><path d="M635.20,390.60 L636.60,389.00 L639.80,389.00 L641.20,390.60 Z"/><rect x="637.80" y="390.40" width="0.9" height="2.6"/></g>
<path d="M749.08,383.62 A21.10,21.10 0 1 1 778.92,383.62 L773.95,378.65 A14.50,14.50 0 1 0 751.10,381.60 Z" fill="#b8c41c"/><path d="M774.47,349.01 L774.40,353.28 L778.03,351.37 Z" fill="#fff"/><path d="M776.69,349.88 L777.48,348.72" stroke="#9aa0c8" stroke-width="0.9"/><path d="M763.21,371.16 L778.06,352.04 L777.67,351.72 L761.74,369.95 Z" fill="#6a6a6a"/>
<g fill="#d3d3d3"><circle cx="781.80" cy="388.60" r="3.04"/><rect x="780.89" y="384.80" width="1.82" height="3.80" transform="rotate(0.0 781.80 388.60)"/><rect x="780.89" y="384.80" width="1.82" height="3.80" transform="rotate(45.0 781.80 388.60)"/><rect x="780.89" y="384.80" width="1.82" height="3.80" transform="rotate(90.0 781.80 388.60)"/><rect x="780.89" y="384.80" width="1.82" height="3.80" transform="rotate(135.0 781.80 388.60)"/><rect x="780.89" y="384.80" width="1.82" height="3.80" transform="rotate(180.0 781.80 388.60)"/><rect x="780.89" y="384.80" width="1.82" height="3.80" transform="rotate(225.0 781.80 388.60)"/><rect x="780.89" y="384.80" width="1.82" height="3.80" transform="rotate(270.0 781.80 388.60)"/><rect x="780.89" y="384.80" width="1.82" height="3.80" transform="rotate(315.0 781.80 388.60)"/></g><circle cx="781.80" cy="388.60" r="1.10" fill="#fff"/><g fill="#d3d3d3"><rect x="790.00" y="385.00" width="4.4" height="1.4"/><rect x="790.80" y="386.00" width="2.8" height="3.4"/><path d="M789.20,390.60 L790.60,389.00 L793.80,389.00 L795.20,390.60 Z"/><rect x="791.80" y="390.40" width="0.9" height="2.6"/></g>
</svg>

<div class="th" style="left:58px;top:463px">Channel</div>
<svg class="abs" style="left:111px;top:469px" width="10" height="8"><path d="M1,2 L9,2 L5,6.3 Z" fill="#1f2937"/></svg>
<div class="th" style="left:238px;top:463px">ID</div>
<div class="th" style="left:325px;top:463px">Last</div>
<div class="th" style="left:302px;top:478px">Value</div>
<div class="th" style="left:479px;top:463px">Minimum</div>
<div class="th" style="left:678px;top:463px">Maximum</div>
<svg style="position:absolute;left:255.5px;top:463px" width="9" height="12" viewBox="0 0 9 12"><path d="M0.5,5 L4.5,0.2 L8.5,5 Z M0.5,6.2 L4.5,11 L8.5,6.2 Z" fill="#d2d2d2"/></svg><svg style="position:absolute;left:339.5px;top:478px" width="9" height="12" viewBox="0 0 9 12"><path d="M0.5,5 L4.5,0.2 L8.5,5 Z M0.5,6.2 L4.5,11 L8.5,6.2 Z" fill="#d2d2d2"/></svg><svg style="position:absolute;left:539.5px;top:463px" width="9" height="12" viewBox="0 0 9 12"><path d="M0.5,5 L4.5,0.2 L8.5,5 Z M0.5,6.2 L4.5,11 L8.5,6.2 Z" fill="#d2d2d2"/></svg><svg style="position:absolute;left:741.5px;top:463px" width="9" height="12" viewBox="0 0 9 12"><path d="M0.5,5 L4.5,0.2 L8.5,5 Z M0.5,6.2 L4.5,11 L8.5,6.2 Z" fill="#d2d2d2"/></svg>
<div class="tsep" style="top:496px"></div>
<div class="tr" style="top:497px"><span class="c0">Downtime</span><span class="c1">-4</span><span class="c2"></span><span class="c3"></span><span class="c4"></span><svg class="cg" width="18" height="18" viewBox="0 0 18 18"><g fill="#474747"><circle cx="9.70" cy="7.30" r="3.60"/><rect x="8.62" y="2.80" width="2.16" height="4.50" transform="rotate(0.0 9.70 7.30)"/><rect x="8.62" y="2.80" width="2.16" height="4.50" transform="rotate(40.0 9.70 7.30)"/><rect x="8.62" y="2.80" width="2.16" height="4.50" transform="rotate(80.0 9.70 7.30)"/><rect x="8.62" y="2.80" width="2.16" height="4.50" transform="rotate(120.0 9.70 7.30)"/><rect x="8.62" y="2.80" width="2.16" height="4.50" transform="rotate(160.0 9.70 7.30)"/><rect x="8.62" y="2.80" width="2.16" height="4.50" transform="rotate(200.0 9.70 7.30)"/><rect x="8.62" y="2.80" width="2.16" height="4.50" transform="rotate(240.0 9.70 7.30)"/><rect x="8.62" y="2.80" width="2.16" height="4.50" transform="rotate(280.0 9.70 7.30)"/><rect x="8.62" y="2.80" width="2.16" height="4.50" transform="rotate(320.0 9.70 7.30)"/></g><circle cx="9.70" cy="7.30" r="2.00" fill="#fff"/><g fill="#474747"><circle cx="4.30" cy="13.30" r="2.00"/><rect x="3.70" y="10.80" width="1.20" height="2.50" transform="rotate(0.0 4.30 13.30)"/><rect x="3.70" y="10.80" width="1.20" height="2.50" transform="rotate(51.4 4.30 13.30)"/><rect x="3.70" y="10.80" width="1.20" height="2.50" transform="rotate(102.9 4.30 13.30)"/><rect x="3.70" y="10.80" width="1.20" height="2.50" transform="rotate(154.3 4.30 13.30)"/><rect x="3.70" y="10.80" width="1.20" height="2.50" transform="rotate(205.7 4.30 13.30)"/><rect x="3.70" y="10.80" width="1.20" height="2.50" transform="rotate(257.1 4.30 13.30)"/><rect x="3.70" y="10.80" width="1.20" height="2.50" transform="rotate(308.6 4.30 13.30)"/></g><circle cx="4.30" cy="13.30" r="0.75" fill="#fff"/></svg></div>
<div class="tsep" style="top:527px"></div>
<div class="tr" style="top:528px"><span class="c0">Jitter Average</span><span class="c1">7</span><span class="c2">8 msec</span><span class="c3">0 msec</span><span class="c4">11 msec</span><svg class="cg" width="18" height="18" viewBox="0 0 18 18"><g fill="#474747"><circle cx="9.70" cy="7.30" r="3.60"/><rect x="8.62" y="2.80" width="2.16" height="4.50" transform="rotate(0.0 9.70 7.30)"/><rect x="8.62" y="2.80" width="2.16" height="4.50" transform="rotate(40.0 9.70 7.30)"/><rect x="8.62" y="2.80" width="2.16" height="4.50" transform="rotate(80.0 9.70 7.30)"/><rect x="8.62" y="2.80" width="2.16" height="4.50" transform="rotate(120.0 9.70 7.30)"/><rect x="8.62" y="2.80" width="2.16" height="4.50" transform="rotate(160.0 9.70 7.30)"/><rect x="8.62" y="2.80" width="2.16" height="4.50" transform="rotate(200.0 9.70 7.30)"/><rect x="8.62" y="2.80" width="2.16" height="4.50" transform="rotate(240.0 9.70 7.30)"/><rect x="8.62" y="2.80" width="2.16" height="4.50" transform="rotate(280.0 9.70 7.30)"/><rect x="8.62" y="2.80" width="2.16" height="4.50" transform="rotate(320.0 9.70 7.30)"/></g><circle cx="9.70" cy="7.30" r="2.00" fill="#fff"/><g fill="#474747"><circle cx="4.30" cy="13.30" r="2.00"/><rect x="3.70" y="10.80" width="1.20" height="2.50" transform="rotate(0.0 4.30 13.30)"/><rect x="3.70" y="10.80" width="1.20" height="2.50" transform="rotate(51.4 4.30 13.30)"/><rect x="3.70" y="10.80" width="1.20" height="2.50" transform="rotate(102.9 4.30 13.30)"/><rect x="3.70" y="10.80" width="1.20" height="2.50" transform="rotate(154.3 4.30 13.30)"/><rect x="3.70" y="10.80" width="1.20" height="2.50" transform="rotate(205.7 4.30 13.30)"/><rect x="3.70" y="10.80" width="1.20" height="2.50" transform="rotate(257.1 4.30 13.30)"/><rect x="3.70" y="10.80" width="1.20" height="2.50" transform="rotate(308.6 4.30 13.30)"/></g><circle cx="4.30" cy="13.30" r="0.75" fill="#fff"/></svg></div>
<div class="tsep" style="top:558px"></div>
<div class="tr" style="top:559px"><span class="c0">Jitter Max</span><span class="c1">8</span><span class="c2">18 msec</span><span class="c3">0 msec</span><span class="c4">140 msec</span><svg class="cg" width="18" height="18" viewBox="0 0 18 18"><g fill="#474747"><circle cx="9.70" cy="7.30" r="3.60"/><rect x="8.62" y="2.80" width="2.16" height="4.50" transform="rotate(0.0 9.70 7.30)"/><rect x="8.62" y="2.80" width="2.16" height="4.50" transform="rotate(40.0 9.70 7.30)"/><rect x="8.62" y="2.80" width="2.16" height="4.50" transform="rotate(80.0 9.70 7.30)"/><rect x="8.62" y="2.80" width="2.16" height="4.50" transform="rotate(120.0 9.70 7.30)"/><rect x="8.62" y="2.80" width="2.16" height="4.50" transform="rotate(160.0 9.70 7.30)"/><rect x="8.62" y="2.80" width="2.16" height="4.50" transform="rotate(200.0 9.70 7.30)"/><rect x="8.62" y="2.80" width="2.16" height="4.50" transform="rotate(240.0 9.70 7.30)"/><rect x="8.62" y="2.80" width="2.16" height="4.50" transform="rotate(280.0 9.70 7.30)"/><rect x="8.62" y="2.80" width="2.16" height="4.50" transform="rotate(320.0 9.70 7.30)"/></g><circle cx="9.70" cy="7.30" r="2.00" fill="#fff"/><g fill="#474747"><circle cx="4.30" cy="13.30" r="2.00"/><rect x="3.70" y="10.80" width="1.20" height="2.50" transform="rotate(0.0 4.30 13.30)"/><rect x="3.70" y="10.80" width="1.20" height="2.50" transform="rotate(51.4 4.30 13.30)"/><rect x="3.70" y="10.80" width="1.20" height="2.50" transform="rotate(102.9 4.30 13.30)"/><rect x="3.70" y="10.80" width="1.20" height="2.50" transform="rotate(154.3 4.30 13.30)"/><rect x="3.70" y="10.80" width="1.20" height="2.50" transform="rotate(205.7 4.30 13.30)"/><rect x="3.70" y="10.80" width="1.20" height="2.50" transform="rotate(257.1 4.30 13.30)"/><rect x="3.70" y="10.80" width="1.20" height="2.50" transform="rotate(308.6 4.30 13.30)"/></g><circle cx="4.30" cy="13.30" r="0.75" fill="#fff"/></svg></div>
<div class="tsep" style="top:589px"></div>
<div class="tr" style="top:590px"><span class="c0">Jitter Min</span><span class="c1">6</span><span class="c2">0 msec</span><span class="c3">0 msec</span><span class="c4">8 msec</span><svg class="cg" width="18" height="18" viewBox="0 0 18 18"><g fill="#474747"><circle cx="9.70" cy="7.30" r="3.60"/><rect x="8.62" y="2.80" width="2.16" height="4.50" transform="rotate(0.0 9.70 7.30)"/><rect x="8.62" y="2.80" width="2.16" height="4.50" transform="rotate(40.0 9.70 7.30)"/><rect x="8.62" y="2.80" width="2.16" height="4.50" transform="rotate(80.0 9.70 7.30)"/><rect x="8.62" y="2.80" width="2.16" height="4.50" transform="rotate(120.0 9.70 7.30)"/><rect x="8.62" y="2.80" width="2.16" height="4.50" transform="rotate(160.0 9.70 7.30)"/><rect x="8.62" y="2.80" width="2.16" height="4.50" transform="rotate(200.0 9.70 7.30)"/><rect x="8.62" y="2.80" width="2.16" height="4.50" transform="rotate(240.0 9.70 7.30)"/><rect x="8.62" y="2.80" width="2.16" height="4.50" transform="rotate(280.0 9.70 7.30)"/><rect x="8.62" y="2.80" width="2.16" height="4.50" transform="rotate(320.0 9.70 7.30)"/></g><circle cx="9.70" cy="7.30" r="2.00" fill="#fff"/><g fill="#474747"><circle cx="4.30" cy="13.30" r="2.00"/><rect x="3.70" y="10.80" width="1.20" height="2.50" transform="rotate(0.0 4.30 13.30)"/><rect x="3.70" y="10.80" width="1.20" height="2.50" transform="rotate(51.4 4.30 13.30)"/><rect x="3.70" y="10.80" width="1.20" height="2.50" transform="rotate(102.9 4.30 13.30)"/><rect x="3.70" y="10.80" width="1.20" height="2.50" transform="rotate(154.3 4.30 13.30)"/><rect x="3.70" y="10.80" width="1.20" height="2.50" transform="rotate(205.7 4.30 13.30)"/><rect x="3.70" y="10.80" width="1.20" height="2.50" transform="rotate(257.1 4.30 13.30)"/><rect x="3.70" y="10.80" width="1.20" height="2.50" transform="rotate(308.6 4.30 13.30)"/></g><circle cx="4.30" cy="13.30" r="0.75" fill="#fff"/></svg></div>
<div class="tsep" style="top:620px"></div>
<div class="tr" style="top:621px"><span class="c0">MOS</span><span class="c1">12</span><span class="c2">4.4</span><span class="c3">1.0</span><span class="c4">4.4</span><svg class="cg" width="18" height="18" viewBox="0 0 18 18"><g fill="#474747"><circle cx="9.70" cy="7.30" r="3.60"/><rect x="8.62" y="2.80" width="2.16" height="4.50" transform="rotate(0.0 9.70 7.30)"/><rect x="8.62" y="2.80" width="2.16" height="4.50" transform="rotate(40.0 9.70 7.30)"/><rect x="8.62" y="2.80" width="2.16" height="4.50" transform="rotate(80.0 9.70 7.30)"/><rect x="8.62" y="2.80" width="2.16" height="4.50" transform="rotate(120.0 9.70 7.30)"/><rect x="8.62" y="2.80" width="2.16" height="4.50" transform="rotate(160.0 9.70 7.30)"/><rect x="8.62" y="2.80" width="2.16" height="4.50" transform="rotate(200.0 9.70 7.30)"/><rect x="8.62" y="2.80" width="2.16" height="4.50" transform="rotate(240.0 9.70 7.30)"/><rect x="8.62" y="2.80" width="2.16" height="4.50" transform="rotate(280.0 9.70 7.30)"/><rect x="8.62" y="2.80" width="2.16" height="4.50" transform="rotate(320.0 9.70 7.30)"/></g><circle cx="9.70" cy="7.30" r="2.00" fill="#fff"/><g fill="#474747"><circle cx="4.30" cy="13.30" r="2.00"/><rect x="3.70" y="10.80" width="1.20" height="2.50" transform="rotate(0.0 4.30 13.30)"/><rect x="3.70" y="10.80" width="1.20" height="2.50" transform="rotate(51.4 4.30 13.30)"/><rect x="3.70" y="10.80" width="1.20" height="2.50" transform="rotate(102.9 4.30 13.30)"/><rect x="3.70" y="10.80" width="1.20" height="2.50" transform="rotate(154.3 4.30 13.30)"/><rect x="3.70" y="10.80" width="1.20" height="2.50" transform="rotate(205.7 4.30 13.30)"/><rect x="3.70" y="10.80" width="1.20" height="2.50" transform="rotate(257.1 4.30 13.30)"/><rect x="3.70" y="10.80" width="1.20" height="2.50" transform="rotate(308.6 4.30 13.30)"/></g><circle cx="4.30" cy="13.30" r="0.75" fill="#fff"/></svg></div>
<div class="tsep" style="top:651px"></div>
<div class="tr" style="top:652px"><span class="c0">Packet Delay Variation <span style="position:static;letter-spacing:-0.5px;margin-left:-2.5px">...</span></span><span class="c1">10</span><span class="c2">0 msec</span><span class="c3">0 msec</span><span class="c4">0 msec</span><svg class="cg" width="18" height="18" viewBox="0 0 18 18"><g fill="#474747"><circle cx="9.70" cy="7.30" r="3.60"/><rect x="8.62" y="2.80" width="2.16" height="4.50" transform="rotate(0.0 9.70 7.30)"/><rect x="8.62" y="2.80" width="2.16" height="4.50" transform="rotate(40.0 9.70 7.30)"/><rect x="8.62" y="2.80" width="2.16" height="4.50" transform="rotate(80.0 9.70 7.30)"/><rect x="8.62" y="2.80" width="2.16" height="4.50" transform="rotate(120.0 9.70 7.30)"/><rect x="8.62" y="2.80" width="2.16" height="4.50" transform="rotate(160.0 9.70 7.30)"/><rect x="8.62" y="2.80" width="2.16" height="4.50" transform="rotate(200.0 9.70 7.30)"/><rect x="8.62" y="2.80" width="2.16" height="4.50" transform="rotate(240.0 9.70 7.30)"/><rect x="8.62" y="2.80" width="2.16" height="4.50" transform="rotate(280.0 9.70 7.30)"/><rect x="8.62" y="2.80" width="2.16" height="4.50" transform="rotate(320.0 9.70 7.30)"/></g><circle cx="9.70" cy="7.30" r="2.00" fill="#fff"/><g fill="#474747"><circle cx="4.30" cy="13.30" r="2.00"/><rect x="3.70" y="10.80" width="1.20" height="2.50" transform="rotate(0.0 4.30 13.30)"/><rect x="3.70" y="10.80" width="1.20" height="2.50" transform="rotate(51.4 4.30 13.30)"/><rect x="3.70" y="10.80" width="1.20" height="2.50" transform="rotate(102.9 4.30 13.30)"/><rect x="3.70" y="10.80" width="1.20" height="2.50" transform="rotate(154.3 4.30 13.30)"/><rect x="3.70" y="10.80" width="1.20" height="2.50" transform="rotate(205.7 4.30 13.30)"/><rect x="3.70" y="10.80" width="1.20" height="2.50" transform="rotate(257.1 4.30 13.30)"/><rect x="3.70" y="10.80" width="1.20" height="2.50" transform="rotate(308.6 4.30 13.30)"/></g><circle cx="4.30" cy="13.30" r="0.75" fill="#fff"/></svg></div>
<div class="tsep" style="top:682px"></div>
<div class="tr" style="top:683px"><span class="c0">Packet Delay Variation <span style="position:static;letter-spacing:-0.5px;margin-left:-2.5px">...</span></span><span class="c1">11</span><span class="c2">92 msec</span><span class="c3">2 msec</span><span class="c4">1,229 msec</span><svg class="cg" width="18" height="18" viewBox="0 0 18 18"><g fill="#474747"><circle cx="9.70" cy="7.30" r="3.60"/><rect x="8.62" y="2.80" width="2.16" height="4.50" transform="rotate(0.0 9.70 7.30)"/><rect x="8.62" y="2.80" width="2.16" height="4.50" transform="rotate(40.0 9.70 7.30)"/><rect x="8.62" y="2.80" width="2.16" height="4.50" transform="rotate(80.0 9.70 7.30)"/><rect x="8.62" y="2.80" width="2.16" height="4.50" transform="rotate(120.0 9.70 7.30)"/><rect x="8.62" y="2.80" width="2.16" height="4.50" transform="rotate(160.0 9.70 7.30)"/><rect x="8.62" y="2.80" width="2.16" height="4.50" transform="rotate(200.0 9.70 7.30)"/><rect x="8.62" y="2.80" width="2.16" height="4.50" transform="rotate(240.0 9.70 7.30)"/><rect x="8.62" y="2.80" width="2.16" height="4.50" transform="rotate(280.0 9.70 7.30)"/><rect x="8.62" y="2.80" width="2.16" height="4.50" transform="rotate(320.0 9.70 7.30)"/></g><circle cx="9.70" cy="7.30" r="2.00" fill="#fff"/><g fill="#474747"><circle cx="4.30" cy="13.30" r="2.00"/><rect x="3.70" y="10.80" width="1.20" height="2.50" transform="rotate(0.0 4.30 13.30)"/><rect x="3.70" y="10.80" width="1.20" height="2.50" transform="rotate(51.4 4.30 13.30)"/><rect x="3.70" y="10.80" width="1.20" height="2.50" transform="rotate(102.9 4.30 13.30)"/><rect x="3.70" y="10.80" width="1.20" height="2.50" transform="rotate(154.3 4.30 13.30)"/><rect x="3.70" y="10.80" width="1.20" height="2.50" transform="rotate(205.7 4.30 13.30)"/><rect x="3.70" y="10.80" width="1.20" height="2.50" transform="rotate(257.1 4.30 13.30)"/><rect x="3.70" y="10.80" width="1.20" height="2.50" transform="rotate(308.6 4.30 13.30)"/></g><circle cx="4.30" cy="13.30" r="0.75" fill="#fff"/></svg></div>
<div class="tsep" style="top:713px"></div>
<div class="tr" style="top:714px"><span class="c0">Packet Delay Variation <span style="position:static;letter-spacing:-0.5px;margin-left:-2.5px">...</span></span><span class="c1">9</span><span class="c2">-92 msec</span><span class="c3">-636 msec</span><span class="c4">-2 msec</span><svg class="cg" width="18" height="18" viewBox="0 0 18 18"><g fill="#474747"><circle cx="9.70" cy="7.30" r="3.60"/><rect x="8.62" y="2.80" width="2.16" height="4.50" transform="rotate(0.0 9.70 7.30)"/><rect x="8.62" y="2.80" width="2.16" height="4.50" transform="rotate(40.0 9.70 7.30)"/><rect x="8.62" y="2.80" width="2.16" height="4.50" transform="rotate(80.0 9.70 7.30)"/><rect x="8.62" y="2.80" width="2.16" height="4.50" transform="rotate(120.0 9.70 7.30)"/><rect x="8.62" y="2.80" width="2.16" height="4.50" transform="rotate(160.0 9.70 7.30)"/><rect x="8.62" y="2.80" width="2.16" height="4.50" transform="rotate(200.0 9.70 7.30)"/><rect x="8.62" y="2.80" width="2.16" height="4.50" transform="rotate(240.0 9.70 7.30)"/><rect x="8.62" y="2.80" width="2.16" height="4.50" transform="rotate(280.0 9.70 7.30)"/><rect x="8.62" y="2.80" width="2.16" height="4.50" transform="rotate(320.0 9.70 7.30)"/></g><circle cx="9.70" cy="7.30" r="2.00" fill="#fff"/><g fill="#474747"><circle cx="4.30" cy="13.30" r="2.00"/><rect x="3.70" y="10.80" width="1.20" height="2.50" transform="rotate(0.0 4.30 13.30)"/><rect x="3.70" y="10.80" width="1.20" height="2.50" transform="rotate(51.4 4.30 13.30)"/><rect x="3.70" y="10.80" width="1.20" height="2.50" transform="rotate(102.9 4.30 13.30)"/><rect x="3.70" y="10.80" width="1.20" height="2.50" transform="rotate(154.3 4.30 13.30)"/><rect x="3.70" y="10.80" width="1.20" height="2.50" transform="rotate(205.7 4.30 13.30)"/><rect x="3.70" y="10.80" width="1.20" height="2.50" transform="rotate(257.1 4.30 13.30)"/><rect x="3.70" y="10.80" width="1.20" height="2.50" transform="rotate(308.6 4.30 13.30)"/></g><circle cx="4.30" cy="13.30" r="0.75" fill="#fff"/></svg></div>
<div class="tsep" style="top:744px"></div>
<div class="tr" style="top:745px"><span class="c0">Packets Corrupted</span><span class="c1">5</span><span class="c2">0 %</span><span class="c3">0 %</span><span class="c4">0 %</span><svg class="cg" width="18" height="18" viewBox="0 0 18 18"><g fill="#474747"><circle cx="9.70" cy="7.30" r="3.60"/><rect x="8.62" y="2.80" width="2.16" height="4.50" transform="rotate(0.0 9.70 7.30)"/><rect x="8.62" y="2.80" width="2.16" height="4.50" transform="rotate(40.0 9.70 7.30)"/><rect x="8.62" y="2.80" width="2.16" height="4.50" transform="rotate(80.0 9.70 7.30)"/><rect x="8.62" y="2.80" width="2.16" height="4.50" transform="rotate(120.0 9.70 7.30)"/><rect x="8.62" y="2.80" width="2.16" height="4.50" transform="rotate(160.0 9.70 7.30)"/><rect x="8.62" y="2.80" width="2.16" height="4.50" transform="rotate(200.0 9.70 7.30)"/><rect x="8.62" y="2.80" width="2.16" height="4.50" transform="rotate(240.0 9.70 7.30)"/><rect x="8.62" y="2.80" width="2.16" height="4.50" transform="rotate(280.0 9.70 7.30)"/><rect x="8.62" y="2.80" width="2.16" height="4.50" transform="rotate(320.0 9.70 7.30)"/></g><circle cx="9.70" cy="7.30" r="2.00" fill="#fff"/><g fill="#474747"><circle cx="4.30" cy="13.30" r="2.00"/><rect x="3.70" y="10.80" width="1.20" height="2.50" transform="rotate(0.0 4.30 13.30)"/><rect x="3.70" y="10.80" width="1.20" height="2.50" transform="rotate(51.4 4.30 13.30)"/><rect x="3.70" y="10.80" width="1.20" height="2.50" transform="rotate(102.9 4.30 13.30)"/><rect x="3.70" y="10.80" width="1.20" height="2.50" transform="rotate(154.3 4.30 13.30)"/><rect x="3.70" y="10.80" width="1.20" height="2.50" transform="rotate(205.7 4.30 13.30)"/><rect x="3.70" y="10.80" width="1.20" height="2.50" transform="rotate(257.1 4.30 13.30)"/><rect x="3.70" y="10.80" width="1.20" height="2.50" transform="rotate(308.6 4.30 13.30)"/></g><circle cx="4.30" cy="13.30" r="0.75" fill="#fff"/></svg></div>
<div class="tsep" style="top:775px"></div>
<div class="tr" style="top:776px"><span class="c0">Packets Duplicated</span><span class="c1">4</span><span class="c2">0 %</span><span class="c3">0 %</span><span class="c4">0 %</span><svg class="cg" width="18" height="18" viewBox="0 0 18 18"><g fill="#474747"><circle cx="9.70" cy="7.30" r="3.60"/><rect x="8.62" y="2.80" width="2.16" height="4.50" transform="rotate(0.0 9.70 7.30)"/><rect x="8.62" y="2.80" width="2.16" height="4.50" transform="rotate(40.0 9.70 7.30)"/><rect x="8.62" y="2.80" width="2.16" height="4.50" transform="rotate(80.0 9.70 7.30)"/><rect x="8.62" y="2.80" width="2.16" height="4.50" transform="rotate(120.0 9.70 7.30)"/><rect x="8.62" y="2.80" width="2.16" height="4.50" transform="rotate(160.0 9.70 7.30)"/><rect x="8.62" y="2.80" width="2.16" height="4.50" transform="rotate(200.0 9.70 7.30)"/><rect x="8.62" y="2.80" width="2.16" height="4.50" transform="rotate(240.0 9.70 7.30)"/><rect x="8.62" y="2.80" width="2.16" height="4.50" transform="rotate(280.0 9.70 7.30)"/><rect x="8.62" y="2.80" width="2.16" height="4.50" transform="rotate(320.0 9.70 7.30)"/></g><circle cx="9.70" cy="7.30" r="2.00" fill="#fff"/><g fill="#474747"><circle cx="4.30" cy="13.30" r="2.00"/><rect x="3.70" y="10.80" width="1.20" height="2.50" transform="rotate(0.0 4.30 13.30)"/><rect x="3.70" y="10.80" width="1.20" height="2.50" transform="rotate(51.4 4.30 13.30)"/><rect x="3.70" y="10.80" width="1.20" height="2.50" transform="rotate(102.9 4.30 13.30)"/><rect x="3.70" y="10.80" width="1.20" height="2.50" transform="rotate(154.3 4.30 13.30)"/><rect x="3.70" y="10.80" width="1.20" height="2.50" transform="rotate(205.7 4.30 13.30)"/><rect x="3.70" y="10.80" width="1.20" height="2.50" transform="rotate(257.1 4.30 13.30)"/><rect x="3.70" y="10.80" width="1.20" height="2.50" transform="rotate(308.6 4.30 13.30)"/></g><circle cx="4.30" cy="13.30" r="0.75" fill="#fff"/></svg></div>
<div class="tsep" style="top:806px"></div>
</body></html>
